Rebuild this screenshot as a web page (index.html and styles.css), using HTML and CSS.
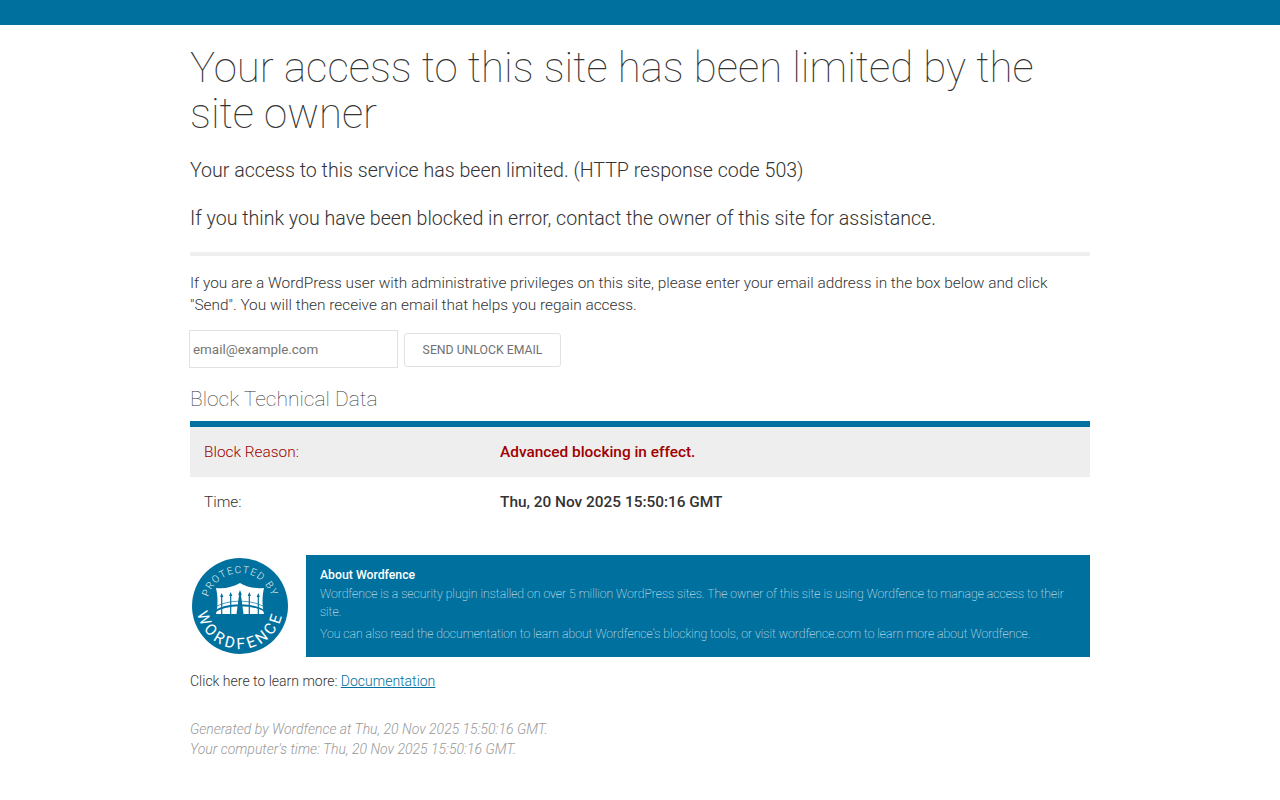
FILE: index.html
```html
<!DOCTYPE html>
<html lang="en">
<head>
    <meta charset="UTF-8">
    <title>Your access to this site has been limited by the site owner</title>
    <link rel="stylesheet" href="styles.css">
</head>
<body>
    <div class="topbar"></div>
    <div class="container">
        <h1>Your access to this site has been limited by the site owner</h1>
        <p class="lead">Your access to this service has been limited. (HTTP response code 503)</p>
        <p class="lead">If you think you have been blocked in error, contact the owner of this site for assistance.</p>
        <hr class="rule">
        <p class="unlock-text">If you are a WordPress user with administrative privileges on this site, please enter your email address in the box below and click "Send". You will then receive an email that helps you regain access.</p>
        <form class="unlock-form" action="">
            <input class="email" type="text" placeholder="email@example.com">
            <input class="send" type="button" value="SEND UNLOCK EMAIL">
        </form>
        <h2>Block Technical Data</h2>
        <table class="tech">
            <tr class="reason">
                <td class="label">Block Reason:</td>
                <td class="value">Advanced blocking in effect.</td>
            </tr>
            <tr>
                <td class="label">Time:</td>
                <td class="value">Thu, 20 Nov 2025 15:50:16 GMT</td>
            </tr>
        </table>
        <div class="about-row">
            <svg class="badge" width="100" height="100" viewBox="0 0 100 100">
                <defs>
                    <path id="arc-top" d="M 17 50 A 33 33 0 0 1 83 50"></path>
                    <path id="arc-bottom" d="M 7 50 A 43 43 0 0 0 93 50"></path>
                </defs>
                <circle cx="50" cy="50" r="48" fill="#00709e"></circle>
                <text class="badge-top"><textPath href="#arc-top" startOffset="50%" text-anchor="middle">PROTECTED BY</textPath></text>
                <text class="badge-bottom"><textPath href="#arc-bottom" startOffset="50%" text-anchor="middle">WORDFENCE</textPath></text>
                <path fill="#fff" d="M26 32 C35 33 43 31 50 27 C57 31 65 33 74 32 C72 41 72 49 74 58 L26 58 C28 49 28 41 26 32 Z"></path>
                <g fill="none" stroke="#00709e" stroke-width="1.200">
                    <path d="M31.700 41 V58 M40.700 40 V58 M59.300 40 V58 M68.300 41 V58"></path>
                    <path d="M24 56 C36 47 64 47 76 56" stroke-width="1.800"></path>
                    <path d="M24 52 C36 43 64 43 76 52" stroke-width="0.700"></path>
                </g>
                <g fill="#00709e">
                    <path d="M31.700 37 l1.600 4 h-3.200 Z M40.700 36 l1.600 4 h-3.200 Z M50 34 l1.800 5 h-3.600 Z M59.300 36 l1.600 4 h-3.200 Z M68.300 37 l1.600 4 h-3.200 Z"></path>
                    <path d="M49.200 38 h1.600 l2.700 20 h-7 Z"></path>
                </g>
            </svg>
            <div class="about">
                <div class="about-title">About Wordfence</div>
                <p>Wordfence is a security plugin installed on over 5 million WordPress sites. The owner of this site is using Wordfence to manage access to their site.</p>
                <p>You can also read the documentation to learn about Wordfence's blocking tools, or visit wordfence.com to learn more about Wordfence.</p>
            </div>
        </div>
        <p class="more">Click here to learn more: <a href="#">Documentation</a></p>
        <p class="generated">Generated by Wordfence at Thu, 20 Nov 2025 15:50:16 GMT.<br>Your computer's time: Thu, 20 Nov 2025 15:50:16 GMT.</p>
    </div>
</body>
</html>
```

FILE: styles.css
```css
html {
    font-size: 10px;
}
body {
    margin: 0;
    background: #fff;
    color: #333;
    font-family: Roboto, "Liberation Sans", sans-serif;
    font-weight: 300;
}
.topbar {
    height: 25px;
    background: #00709e;
}
.container {
    width: 900px;
    margin: 0 auto;
}
h1 {
    margin: 20px 0 0;
    font-size: 42px;
    font-weight: 100;
    line-height: 46px;
}
.lead {
    margin: 21px 0 0;
    font-size: 19.600px;
    line-height: 26px;
}
.lead + .lead {
    margin-top: 22px;
}
.rule {
    height: 4px;
    margin: 20px 0 0;
    border: 0;
    background: #efefef;
}
.unlock-text {
    margin: 16px 0 0;
    font-size: 15.400px;
    line-height: 22px;
}
.unlock-form {
    display: flex;
    align-items: flex-start;
    gap: 6px;
    margin: 14px 0 0 -1px;
}
.email {
    box-sizing: border-box;
    width: 209px;
    height: 38px;
    padding: 0 3px;
    border: 1px solid #e2e2e2;
    font-family: Roboto, sans-serif;
    font-size: 13.400px;
    font-weight: 400;
    color: #555;
}
.email::placeholder {
    color: #757575;
    opacity: 1;
}
.send {
    box-sizing: border-box;
    width: 157px;
    height: 34px;
    margin-top: 3px;
    border: 1px solid #e2e2e2;
    border-radius: 3px;
    background: #fff;
    color: #707070;
    font-family: Roboto, sans-serif;
    font-size: 12.250px;
    font-weight: 400;
}
h2 {
    margin: 17px 0 0;
    font-size: 21px;
    font-weight: 100;
    line-height: 28px;
}
.tech {
    width: 100%;
    margin-top: 8px;
    border-collapse: collapse;
    border-top: 6px solid #00709e;
    font-size: 15.400px;
}
.tech td {
    height: 50px;
    padding: 0 14px;
}
.tech .label {
    width: 268px;
}
.tech .value {
    font-weight: 500;
}
.reason {
    background: #eee;
    color: #a00000;
}
.about-row {
    display: flex;
    gap: 16px;
    margin-top: 28px;
}
.badge {
    flex: none;
    margin-top: 1px;
}
.badge-top {
    fill: #e4f0f5;
    font-size: 10px;
    font-weight: 300;
    letter-spacing: 1.300px;
}
.badge-bottom {
    fill: #fff;
    font-size: 15.500px;
    font-weight: 400;
    letter-spacing: 3.200px;
}
.about {
    flex: 1;
    box-sizing: border-box;
    height: 102px;
    padding: 12px 14px;
    background: #00709e;
    color: #fff;
    font-size: 12.250px;
    line-height: 17px;
}
.about-title {
    font-weight: 500;
    line-height: 17px;
}
.about p {
    margin: 1px 0 4px;
    font-weight: 100;
    line-height: 18px;
}
.more {
    margin: 14px 0 0;
    font-size: 14px;
    line-height: 20px;
}
.more a {
    color: #00709e;
}
.generated {
    margin: 28px 0 0;
    color: #999;
    font-size: 14px;
    font-style: italic;
    line-height: 20px;
}
```
